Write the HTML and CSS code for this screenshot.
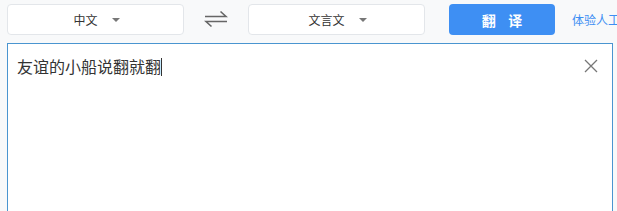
FILE: index.html
```html
<!DOCTYPE html>
<html lang="zh">
<head>
    <meta charset="UTF-8">
    <title>翻译</title>
    <link rel="stylesheet" href="styles.css">
</head>
<body>
    <!-- Language bar -->
    <div class="toolbar">
        <div class="select">
            <span>中文</span>
            <i class="caret"></i>
        </div>
        <div class="swap">
            <svg width="24" height="18" viewBox="0 0 24 18">
                <path d="M1 6.5 H22 L16.5 1.5" fill="none" stroke="#666" stroke-width="1.6"/>
                <path d="M23 11.5 H2 L7.5 16.5" fill="none" stroke="#666" stroke-width="1.6"/>
            </svg>
        </div>
        <div class="select">
            <span>文言文</span>
            <i class="caret"></i>
        </div>
        <button class="translate">翻&nbsp;&nbsp;&nbsp;&nbsp;译</button>
        <a class="human" href="javascript:void(0)">体验人工翻译</a>
    </div>

    <!-- Input -->
    <div class="input-box">
        <div class="input-text">友谊的小船说翻就翻<span class="cursor"></span></div>
        <svg class="clear" width="14" height="14" viewBox="0 0 14 14">
            <path d="M1 1 L13 13 M13 1 L1 13" stroke="#777" stroke-width="1.3"/>
        </svg>
    </div>
</body>
</html>
```

FILE: styles.css
```css
/* Global */
body {
    margin: 0;
    background-color: #f8f9fa;
    font-family: "Noto Sans CJK SC", "Noto Sans", sans-serif;
    overflow: hidden;
}

/* Top bar */
.toolbar {
    display: flex;
    align-items: center;
    height: 31px;
    padding: 4px 0 0 7px;
    white-space: nowrap;
    overflow: hidden;
}

.toolbar > * {
    flex-shrink: 0;
}

.select {
    box-sizing: border-box;
    width: 177px;
    height: 31px;
    display: flex;
    align-items: center;
    justify-content: center;
    gap: 14px;
    background: #fff;
    border: 1px solid #e3e6ea;
    border-radius: 4px;
    font-size: 12px;
    color: #333;
}

.select span {
    margin-left: 2px;
}

.caret {
    width: 0;
    height: 0;
    border-left: 4px solid transparent;
    border-right: 4px solid transparent;
    border-top: 4px solid #777;
}

.swap {
    width: 64px;
    display: flex;
    justify-content: center;
    padding-bottom: 1px;
}

.translate {
    box-sizing: border-box;
    width: 106px;
    height: 31px;
    margin-left: 24px;
    border: none;
    border-radius: 4px;
    background-color: #3e8ff3;
    color: #fff;
    font-family: inherit;
    font-size: 14px;
    font-weight: bold;
}

.human {
    margin-left: 17px;
    font-size: 12px;
    color: #3e8ff3;
    text-decoration: none;
}

/* Text input area */
.input-box {
    box-sizing: border-box;
    position: relative;
    margin: 8px 0 0 7px;
    width: 606px;
    height: 168px;
    background: #fff;
    border: 1px solid #4a95d0;
    border-bottom: none;
}

.input-text {
    padding: 10px 0 0 9px;
    font-size: 16px;
    line-height: 24px;
    color: #333;
}

.cursor {
    display: inline-block;
    width: 1px;
    height: 18px;
    vertical-align: -3px;
    background: #333;
}

.clear {
    position: absolute;
    top: 15px;
    right: 14px;
}
```
